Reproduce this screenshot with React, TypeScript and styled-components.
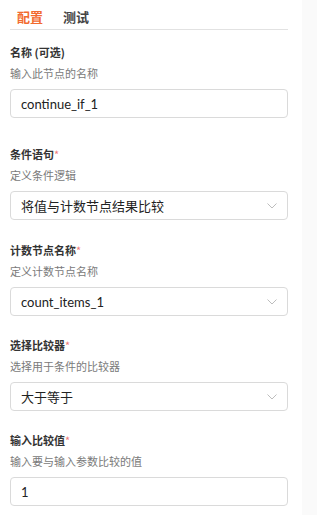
import React from "react";
import styled, { createGlobalStyle } from "styled-components";

const Global = createGlobalStyle`
  html, body { margin: 0; padding: 0; background: #ffffff; }
  body { font-family: Lato, "Noto Sans CJK SC", sans-serif; }
  * { box-sizing: border-box; }
`;

const Page = styled.div`
  display: flex;
  width: 317px;
  height: 515px;
  overflow: hidden;
`;

const Panel = styled.div`
  width: 302px;
  padding: 0 14px 0 10px;
  background: #ffffff;
`;

const Gutter = styled.div`
  flex: 1;
  background: #fafafa;
`;

const Tabs = styled.div`
  display: flex;
  gap: 20px;
  height: 30px;
  padding: 8px 0 0 7px;
  border-bottom: 1px solid #e2e2e2;
`;

const Tab = styled.div<{ $active?: boolean }>`
  font-family: "Noto Sans CJK SC", sans-serif;
  font-size: 13px;
  font-weight: 700;
  line-height: 18px;
  color: ${(p) => (p.$active ? "#f26b2f" : "#444444")};
`;

const Field = styled.div<{ $gap: number }>`
  display: flex;
  flex-direction: column;
  margin-top: ${(p) => p.$gap}px;
`;

const Label = styled.div`
  font-family: "Noto Sans CJK SC", sans-serif;
  font-size: 11px;
  font-weight: 700;
  line-height: 17px;
  color: #333333;
`;

const Star = styled.span`
  color: #ef7b7b;
  font-weight: 400;
`;

const Desc = styled.div`
  margin-top: 4px;
  font-family: "Noto Sans CJK SC", sans-serif;
  font-size: 11px;
  line-height: 16px;
  color: #7a7a7a;
`;

const Box = styled.div`
  margin-top: 8px;
  height: 29px;
  border: 1px solid #dadada;
  border-radius: 4px;
  display: flex;
  align-items: center;
  justify-content: space-between;
  padding: 0 10px 0 10px;
  font-family: Lato, "Noto Sans CJK SC", sans-serif;
  font-size: 13px;
  color: #222222;
`;

const Chevron = () => (
  <svg width="10" height="6" viewBox="0 0 10 6" fill="none">
    <path d="M0.5 0.5 L5 5 L9.5 0.5" stroke="#bdbdbd" strokeWidth="1" />
  </svg>
);

const fields = [
  { gap: 14, label: "名称 (可选)", req: false, desc: "输入此节点的名称", value: "continue_if_1", select: false },
  { gap: 28, label: "条件语句", req: true, desc: "定义条件逻辑", value: "将值与计数节点结果比较", select: true },
  { gap: 22, label: "计数节点名称", req: true, desc: "定义计数节点名称", value: "count_items_1", select: true },
  { gap: 21, label: "选择比较器", req: true, desc: "选择用于条件的比较器", value: "大于等于", select: true },
  { gap: 21, label: "输入比较值", req: true, desc: "输入要与输入参数比较的值", value: "1", select: false },
];

export default function App() {
  return (
    <Page>
      <Global />
      <Panel>
        <Tabs>
          <Tab $active>配置</Tab>
          <Tab>测试</Tab>
        </Tabs>
        {fields.map((f) => (
          <Field key={f.label} $gap={f.gap}>
            <Label>
              {f.label}
              {f.req && <Star>*</Star>}
            </Label>
            <Desc>{f.desc}</Desc>
            <Box>
              <span>{f.value}</span>
              {f.select && <Chevron />}
            </Box>
          </Field>
        ))}
      </Panel>
      <Gutter />
    </Page>
  );
}
